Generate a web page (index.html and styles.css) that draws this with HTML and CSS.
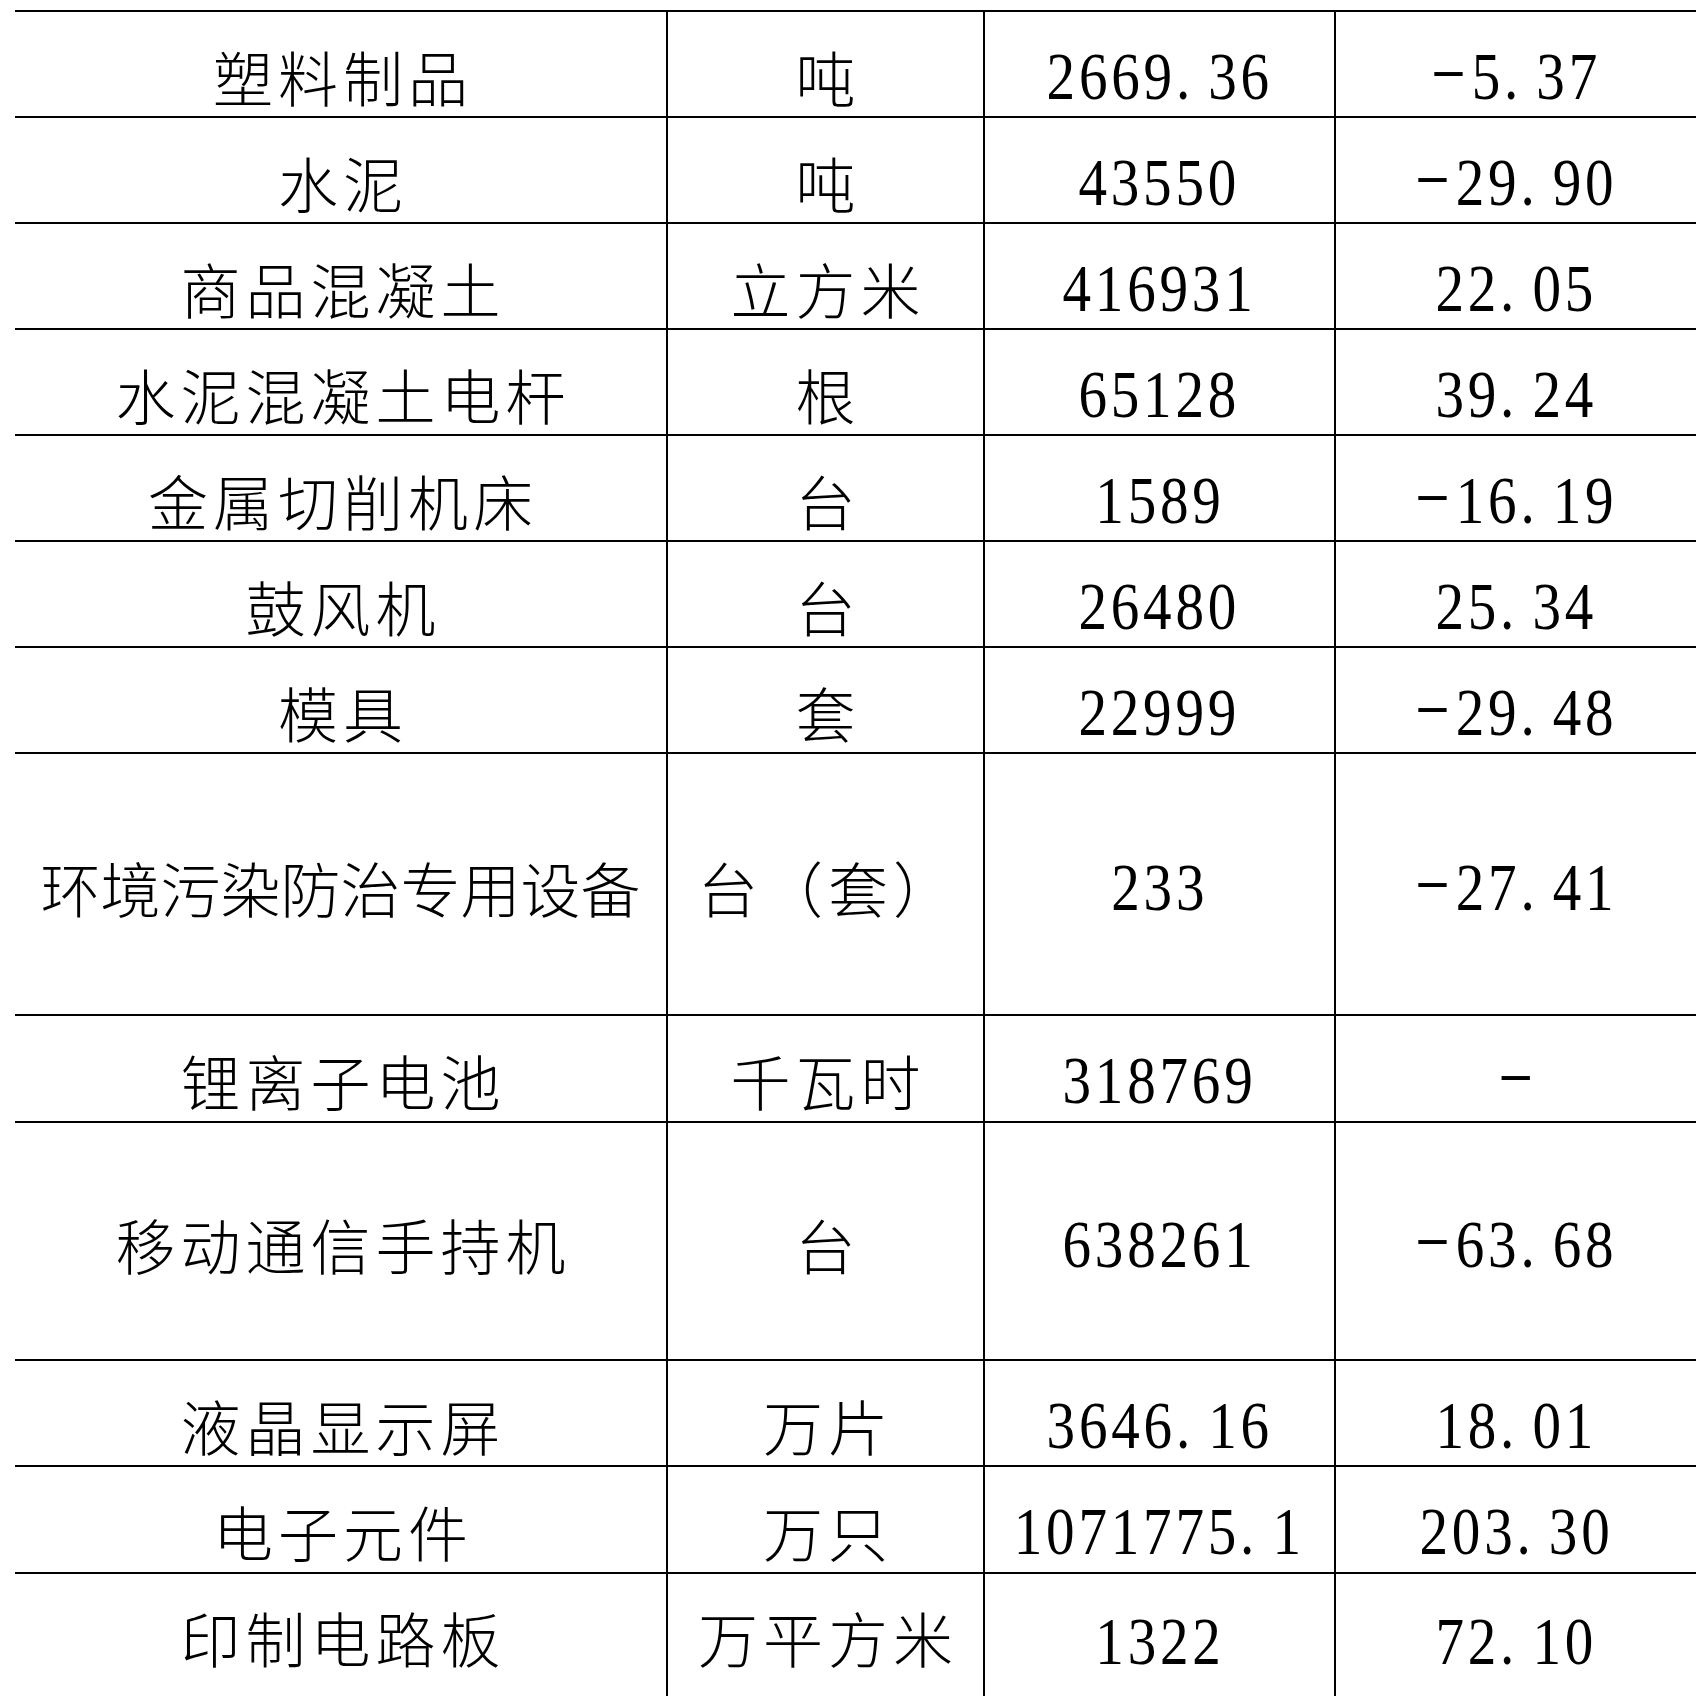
FILE: index.html
```html
<!DOCTYPE html>
<html lang="zh-CN">
<head>
<meta charset="utf-8">
<title>工业产品产量</title>
<link rel="stylesheet" href="styles.css">
</head>
<body>
<div class="table">
  <div class="row">
    <div class="cell"><span class="t">塑料制品</span></div>
    <div class="cell"><span class="t">吨</span></div>
    <div class="cell"><span class="n">2669<span class="dot">.</span>36</span></div>
    <div class="cell"><span class="n"><span class="neg">-</span>5<span class="dot">.</span>37</span></div>
  </div>
  <div class="row">
    <div class="cell"><span class="t">水泥</span></div>
    <div class="cell"><span class="t">吨</span></div>
    <div class="cell"><span class="n">43550</span></div>
    <div class="cell"><span class="n"><span class="neg">-</span>29<span class="dot">.</span>90</span></div>
  </div>
  <div class="row">
    <div class="cell"><span class="t">商品混凝土</span></div>
    <div class="cell"><span class="t">立方米</span></div>
    <div class="cell"><span class="n">416931</span></div>
    <div class="cell"><span class="n">22<span class="dot">.</span>05</span></div>
  </div>
  <div class="row">
    <div class="cell"><span class="t">水泥混凝土电杆</span></div>
    <div class="cell"><span class="t">根</span></div>
    <div class="cell"><span class="n">65128</span></div>
    <div class="cell"><span class="n">39<span class="dot">.</span>24</span></div>
  </div>
  <div class="row">
    <div class="cell"><span class="t">金属切削机床</span></div>
    <div class="cell"><span class="t">台</span></div>
    <div class="cell"><span class="n">1589</span></div>
    <div class="cell"><span class="n"><span class="neg">-</span>16<span class="dot">.</span>19</span></div>
  </div>
  <div class="row">
    <div class="cell"><span class="t">鼓风机</span></div>
    <div class="cell"><span class="t">台</span></div>
    <div class="cell"><span class="n">26480</span></div>
    <div class="cell"><span class="n">25<span class="dot">.</span>34</span></div>
  </div>
  <div class="row">
    <div class="cell"><span class="t">模具</span></div>
    <div class="cell"><span class="t">套</span></div>
    <div class="cell"><span class="n">22999</span></div>
    <div class="cell"><span class="n"><span class="neg">-</span>29<span class="dot">.</span>48</span></div>
  </div>
  <div class="row tall tall-a">
    <div class="cell"><span class="t tight">环境污染防治专用设备</span></div>
    <div class="cell"><span class="t">台（套）</span></div>
    <div class="cell"><span class="n">233</span></div>
    <div class="cell"><span class="n"><span class="neg">-</span>27<span class="dot">.</span>41</span></div>
  </div>
  <div class="row row-107">
    <div class="cell"><span class="t">锂离子电池</span></div>
    <div class="cell"><span class="t">千瓦时</span></div>
    <div class="cell"><span class="n">318769</span></div>
    <div class="cell"><span class="n"><span class="neg solo">-</span></span></div>
  </div>
  <div class="row tall tall-b">
    <div class="cell"><span class="t">移动通信手持机</span></div>
    <div class="cell"><span class="t">台</span></div>
    <div class="cell"><span class="n">638261</span></div>
    <div class="cell"><span class="n"><span class="neg">-</span>63<span class="dot">.</span>68</span></div>
  </div>
  <div class="row">
    <div class="cell"><span class="t">液晶显示屏</span></div>
    <div class="cell"><span class="t">万片</span></div>
    <div class="cell"><span class="n">3646<span class="dot">.</span>16</span></div>
    <div class="cell"><span class="n">18<span class="dot">.</span>01</span></div>
  </div>
  <div class="row row-107">
    <div class="cell"><span class="t">电子元件</span></div>
    <div class="cell"><span class="t">万只</span></div>
    <div class="cell"><span class="n">1071775<span class="dot">.</span>1</span></div>
    <div class="cell"><span class="n">203<span class="dot">.</span>30</span></div>
  </div>
  <div class="row row-last">
    <div class="cell"><span class="t">印制电路板</span></div>
    <div class="cell"><span class="t">万平方米</span></div>
    <div class="cell"><span class="n">1322</span></div>
    <div class="cell"><span class="n">72<span class="dot">.</span>10</span></div>
  </div>
</div>
</body>
</html>
```

FILE: styles.css
```css
html, body {
  margin: 0;
  padding: 0;
  background: #ffffff;
}

body {
  color: #000000;
  font-family: "Noto Sans CJK SC", "Liberation Serif", serif;
}

.table {
  margin: 10px 0 0 15px;
  width: 1681px;
  height: 1686px;
  overflow: hidden;
}

.row {
  display: grid;
  grid-template-columns: 651px 317px 351px 362px;
  height: 106px;
  box-sizing: border-box;
  border-top: 2px solid #000000;
}

.row-107 {
  height: 107px;
}

.tall-a {
  height: 262px;
}

.tall-b {
  height: 238px;
}

.row-last {
  height: 130px;
}

.cell {
  box-sizing: border-box;
  display: flex;
  align-items: center;
  justify-content: center;
  padding-top: 23px;
  overflow: visible;
}

.cell + .cell {
  border-left: 2px solid #000000;
}

.tall .cell {
  padding-top: 5px;
}

.row-last .cell {
  align-items: flex-start;
  padding-top: 33px;
}

.t {
  font-family: "Noto Sans CJK SC", sans-serif;
  font-weight: 300;
  font-size: 60px;
  line-height: 1;
  letter-spacing: 5px;
  margin-right: -5px;
  white-space: nowrap;
}

.t.tight {
  letter-spacing: 0;
  margin-right: 0;
}

.n {
  display: inline-block;
  font-family: "Liberation Serif", serif;
  font-size: 68px;
  line-height: 68px;
  height: 68px;
  letter-spacing: 4.5px;
  transform: scaleX(0.84);
  white-space: nowrap;
}

.dot {
  margin-right: 17px;
}

.neg {
  display: inline-block;
  vertical-align: top;
  height: 68px;
  font-size: 130px;
  line-height: 68px;
  letter-spacing: 0;
  transform: translateY(-7px) scaleY(0.4);
  margin-right: 6px;
}

.neg.solo {
  margin-right: 0;
}
```
